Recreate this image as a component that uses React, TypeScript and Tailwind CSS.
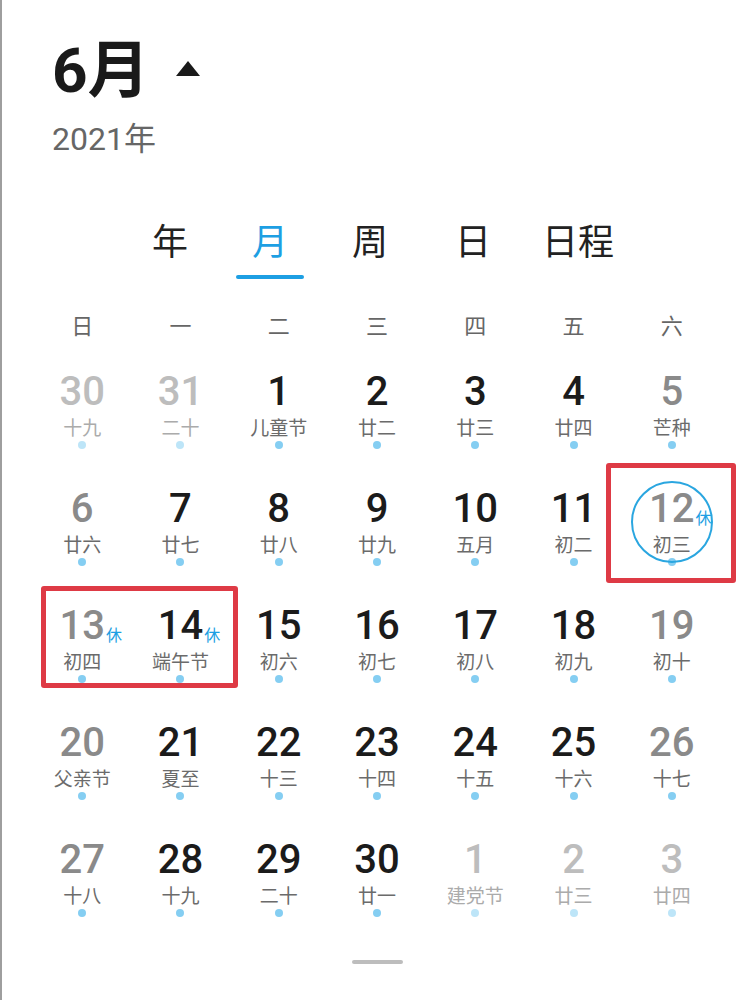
import React from 'react';

type Day = {
  n: number;
  lunar: string;
  kind: 'week' | 'weekend' | 'other';
  rest?: boolean;
  today?: boolean;
};

const rows: Day[][] = [
  [
    { n: 30, lunar: '十九', kind: 'other' },
    { n: 31, lunar: '二十', kind: 'other' },
    { n: 1, lunar: '儿童节', kind: 'week' },
    { n: 2, lunar: '廿二', kind: 'week' },
    { n: 3, lunar: '廿三', kind: 'week' },
    { n: 4, lunar: '廿四', kind: 'week' },
    { n: 5, lunar: '芒种', kind: 'weekend' },
  ],
  [
    { n: 6, lunar: '廿六', kind: 'weekend' },
    { n: 7, lunar: '廿七', kind: 'week' },
    { n: 8, lunar: '廿八', kind: 'week' },
    { n: 9, lunar: '廿九', kind: 'week' },
    { n: 10, lunar: '五月', kind: 'week' },
    { n: 11, lunar: '初二', kind: 'week' },
    { n: 12, lunar: '初三', kind: 'weekend', rest: true, today: true },
  ],
  [
    { n: 13, lunar: '初四', kind: 'weekend', rest: true },
    { n: 14, lunar: '端午节', kind: 'week', rest: true },
    { n: 15, lunar: '初六', kind: 'week' },
    { n: 16, lunar: '初七', kind: 'week' },
    { n: 17, lunar: '初八', kind: 'week' },
    { n: 18, lunar: '初九', kind: 'week' },
    { n: 19, lunar: '初十', kind: 'weekend' },
  ],
  [
    { n: 20, lunar: '父亲节', kind: 'weekend' },
    { n: 21, lunar: '夏至', kind: 'week' },
    { n: 22, lunar: '十三', kind: 'week' },
    { n: 23, lunar: '十四', kind: 'week' },
    { n: 24, lunar: '十五', kind: 'week' },
    { n: 25, lunar: '十六', kind: 'week' },
    { n: 26, lunar: '十七', kind: 'weekend' },
  ],
  [
    { n: 27, lunar: '十八', kind: 'weekend' },
    { n: 28, lunar: '十九', kind: 'week' },
    { n: 29, lunar: '二十', kind: 'week' },
    { n: 30, lunar: '廿一', kind: 'week' },
    { n: 1, lunar: '建党节', kind: 'other' },
    { n: 2, lunar: '廿三', kind: 'other' },
    { n: 3, lunar: '廿四', kind: 'other' },
  ],
];

const weekdays = ['日', '一', '二', '三', '四', '五', '六'];

const tabs = [
  { label: '年', w: 'w-[100px]' },
  { label: '月', w: 'w-[100px]', active: true },
  { label: '周', w: 'w-[100px]' },
  { label: '日', w: 'w-[106px]' },
  { label: '日程', w: 'w-[104px]' },
];

const numColor = {
  week: 'text-[#1b1b1b]',
  weekend: 'text-[#8a8a8a]',
  other: 'text-[#bdbdbd]',
};

function Cell({ d }: { d: Day }) {
  const other = d.kind === 'other';
  return (
    <div className="relative flex h-[117px] flex-col items-center pt-[16px]">
      {d.today && (
        <div className="absolute left-1/2 top-[8px] h-[82px] w-[82px] -translate-x-1/2 rounded-full border-2 border-[#2aa6e0]" />
      )}
      <span className={`relative text-[40px] font-medium leading-[40px] ${numColor[d.kind]}`}>
        {d.n}
        {d.rest && (
          <span className="absolute bottom-[2px] left-full ml-[1px] text-[16px] font-normal leading-[16px] text-[#1d9fe3]">
            休
          </span>
        )}
      </span>
      <span className={`mt-[6px] text-[19px] leading-[22px] ${other ? 'text-[#ababab]' : 'text-[#6b6b6b]'}`}>
        {d.lunar}
      </span>
      <span className={`mt-[1px] h-[8px] w-[8px] rounded-full ${other ? 'bg-[#bde5f8]' : 'bg-[#85cef2]'}`} />
    </div>
  );
}

export default function App() {
  return (
    <div
      className="relative min-h-[1000px] border-l-2 border-[#9e9e9e] bg-white"
      style={{ fontFamily: 'Roboto, "Noto Sans CJK SC", sans-serif' }}
    >
      {/* header */}
      <div className="pl-[50px] pt-[40px]">
        <div className="flex items-start">
          <span className="text-[62px] font-bold leading-[62px] text-[#1a1a1a]">6月</span>
          <svg className="ml-[26px] mt-[21px]" width="24" height="15" viewBox="0 0 24 15">
            <path d="M12 0 L24 15 L0 15 Z" fill="#1a1a1a" />
          </svg>
        </div>
        <div className="mt-[21px] text-[32px] leading-[32px] text-[#666]">2021年</div>
      </div>

      {/* view tabs */}
      <div className="mt-[68px] flex items-start pl-[118px]">
        {tabs.map((t) => (
          <div key={t.label} className={`flex flex-col items-center ${t.w}`}>
            <span className={`text-[36px] leading-[40px] ${t.active ? 'text-[#1d9fe3]' : 'text-[#222]'}`}>
              {t.label}
            </span>
            {t.active && <span className="mt-[12px] h-[4px] w-[68px] rounded-full bg-[#1d9fe3]" />}
          </div>
        ))}
      </div>

      {/* weekday header */}
      <div className="mt-[27px] grid grid-cols-7 px-[31px]">
        {weekdays.map((w) => (
          <div key={w} className="flex h-[40px] items-center justify-center text-[22px] text-[#666]">
            {w}
          </div>
        ))}
      </div>

      {/* month grid */}
      <div className="relative mt-[10px]">
        <div className="grid grid-cols-7 px-[31px]">
          {rows.flat().map((d, i) => (
            <Cell key={i} d={d} />
          ))}
        </div>
        {/* highlight marks */}
        <div className="absolute left-[604px] top-[107px] h-[120px] w-[130px] rounded-[3px] border-[5px] border-[#de3a45]" />
        <div className="absolute left-[39px] top-[230px] h-[102px] w-[197px] rounded-[3px] border-[5px] border-[#de3a45]" />
      </div>

      {/* drag handle */}
      <div className="mx-auto mt-[19px] h-[4px] w-[51px] rounded-full bg-[#bdbdbd]" />
    </div>
  );
}
